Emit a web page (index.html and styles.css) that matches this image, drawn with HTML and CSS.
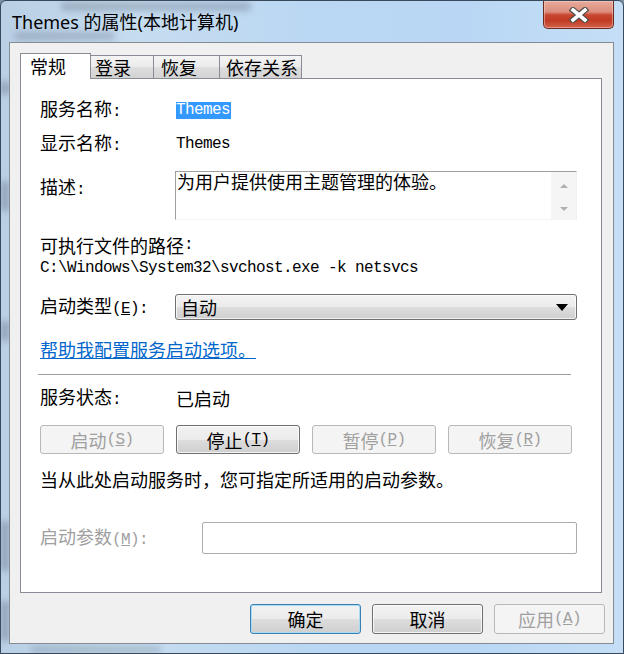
FILE: index.html
```html
<!DOCTYPE html>
<html lang="zh-CN">
<head>
<meta charset="utf-8">
<title>Themes 的属性(本地计算机)</title>
<link rel="stylesheet" href="styles.css">
</head>
<body>
<div class="window">
  <div class="glass">
    <span class="blob g1"></span>
    <span class="blob g2"></span>
    <span class="blob g3"></span>
    <span class="blob g4"></span>
    <span class="blob g5"></span>
    <span class="blob g6"></span>
    <span class="blob g7"></span>
    <span class="blob g8"></span>
  </div>
  <div class="titlebar">
    <div class="title">Themes 的属性(本地计算机)</div>
    <div class="close">
      <svg width="22" height="16" viewBox="0 0 22 16">
        <path d="M5 3 L17 13 M17 3 L5 13" stroke="#4b4b4b" stroke-width="6" stroke-linecap="square" fill="none"/>
        <path d="M5 3 L17 13 M17 3 L5 13" stroke="#ffffff" stroke-width="3.6" stroke-linecap="square" fill="none"/>
      </svg>
    </div>
  </div>
  <div class="client">
    <div class="tabs">
      <div class="tab active t1">常规</div>
      <div class="tab t2">登录</div>
      <div class="tab t3">恢复</div>
      <div class="tab t4">依存关系</div>
    </div>
    <div class="panel">
      <div class="row r1"><span class="lbl">服务名称<span class="lat">:</span></span><span class="lat"><span class="sel">Themes</span></span></div>
      <div class="row r2"><span class="lbl">显示名称<span class="lat">:</span></span><span class="lat">Themes</span></div>
      <div class="row r3">
        <span class="lbl top">描述<span class="lat">:</span></span>
        <div class="desc">
          <div class="desc-text">为用户提供使用主题管理的体验。</div>
          <div class="scroll"><span class="arr up"></span><span class="arr down"></span></div>
        </div>
      </div>
      <div class="row r4">可执行文件的路径<span class="lat">:</span></div>
      <div class="row r5"><span class="lat path">C:\Windows\System32\svchost.exe -k netsvcs</span></div>
      <div class="row r6">
        <span class="lbl">启动类型<span class="lat">(<u>E</u>):</span></span>
        <div class="combo"><span>自动</span><span class="caret"></span></div>
      </div>
      <div class="row r7"><a class="link">帮助我配置服务启动选项。</a></div>
      <div class="sep"></div>
      <div class="row r8"><span class="lbl">服务状态<span class="lat">:</span></span><span>已启动</span></div>
      <div class="btnrow">
        <div class="btn disabled">启动<span class="lat">(<u>S</u>)</span></div>
        <div class="btn">停止<span class="lat">(<u>T</u>)</span></div>
        <div class="btn disabled">暂停<span class="lat">(<u>P</u>)</span></div>
        <div class="btn disabled">恢复<span class="lat">(<u>R</u>)</span></div>
      </div>
      <div class="row r9">当从此处启动服务时，您可指定所适用的启动参数。</div>
      <div class="row r10">
        <span class="lbl wide gray">启动参数<span class="lat">(<u>M</u>):</span></span>
        <div class="input"></div>
      </div>
    </div>
    <div class="footer">
      <div class="btn big default">确定</div>
      <div class="btn big">取消</div>
      <div class="btn big disabled">应用<span class="lat">(<u>A</u>)</span></div>
    </div>
  </div>
</div>
</body>
</html>
```

FILE: styles.css
```css
html, body {
  margin: 0;
  padding: 0;
}
body {
  width: 624px;
  height: 654px;
  overflow: hidden;
  background: #7d8fa3;
}
.window {
  position: relative;
  width: 624px;
  height: 654px;
  box-sizing: border-box;
  border: 1px solid #38495c;
  border-radius: 6px 6px 0 0;
  overflow: hidden;
  background: linear-gradient(90deg, #b9cfe4 0%, #c6dcef 22%, #bad7f3 50%, #b9d7f4 75%, #c5def6 100%);
  font-family: "Noto Sans CJK SC", sans-serif;
  font-size: 18px;
  line-height: 20px;
  color: #000;
}
.glass {
  position: absolute;
  inset: 0;
}
.blob {
  position: absolute;
  background: rgba(70, 80, 100, 0.35);
  filter: blur(3px);
  border-radius: 3px;
}
.g1 { left: 60px; top: 1px; width: 190px; height: 9px; background: rgba(80, 90, 110, 0.3); }
.g2 { left: 14px; top: 31px; width: 100px; height: 8px; background: rgba(80, 90, 110, 0.28); }
.g3 { left: 0; top: 80px; width: 8px; height: 14px; }
.g4 { left: 0; top: 180px; width: 8px; height: 30px; }
.g5 { left: 0; top: 320px; width: 8px; height: 20px; }
.g6 { left: 0; top: 520px; width: 8px; height: 50px; }
.g7 { left: 30px; top: 645px; width: 130px; height: 7px; background: rgba(80, 90, 110, 0.25); }
.g8 { left: 0; top: 600px; width: 8px; height: 40px; }

.titlebar {
  position: relative;
  height: 41px;
  display: flex;
  align-items: flex-start;
}
.title {
  margin: 8px 0 0 11px;
  font-family: "Noto Sans", "Noto Sans CJK SC", sans-serif;
  font-size: 18px;
  line-height: 26px;
  color: #000;
}
.close {
  margin-left: auto;
  margin-right: 9px;
  width: 71px;
  height: 28px;
  box-sizing: border-box;
  border: 1px solid #6b2a20;
  border-top: none;
  border-radius: 0 0 5px 5px;
  background: linear-gradient(180deg, #e7ab9c 0%, #dc8e7d 40%, #c8462f 52%, #c03a24 72%, #d4634c 100%);
  box-shadow: inset 0 0 0 1px rgba(255, 220, 210, 0.45);
  display: flex;
  align-items: center;
  justify-content: center;
}

.client {
  position: relative;
  margin-left: 8px;
  width: 605px;
  height: 602px;
  box-sizing: border-box;
  border: 1px solid #858b92;
  background: #f0f0f0;
  padding: 10px 11px 0 10px;
}
.tabs {
  display: flex;
  align-items: flex-end;
  height: 25px;
  position: relative;
  z-index: 1;
}
.tab {
  box-sizing: border-box;
  height: 23px;
  border: 1px solid #898c95;
  border-bottom: none;
  background: linear-gradient(180deg, #f4f4f4 0%, #ebebeb 50%, #dedede 52%, #d3d3d3 100%);
  line-height: 22px;
  margin-left: -1px;
}
.tab.active {
  height: 26px;
  margin-bottom: -1px;
  margin-left: 0;
  background: #fff;
  line-height: 25px;
}
.t1 { width: 71px; padding-left: 9px; }
.t2 { width: 64px; padding-left: 4px; }
.t3 { width: 67px; padding-left: 7px; }
.t4 { width: 83px; padding-left: 6px; }

.panel {
  box-sizing: border-box;
  width: 582px;
  height: 515px;
  border: 1px solid #898c95;
  background: #fff;
  padding: 21px 24px 0 19px;
}
.lat {
  font-family: "Liberation Mono", monospace;
  font-size: 16px;
  letter-spacing: -0.6px;
}
.row {
  display: flex;
  align-items: center;
  height: 20px;
  white-space: nowrap;
}
.lbl {
  width: 136px;
  flex: none;
}
.lbl.wide { width: 162px; }
.gray { color: #a0a0a0; }
.lbl.top { align-self: flex-start; margin-top: 5px; }
.sel {
  display: inline-block;
  height: 17px;
  line-height: 17px;
  padding-right: 1px;
  background: #3399ff;
  color: #fff;
}
.r2 { margin-top: 14px; }
.r3 { margin-top: 17px; height: 49px; align-items: flex-start; }
.r4 { margin-top: 15px; }
.r5 { margin-top: 3px; }
.r6 { margin-top: 16px; height: 26px; }
.r7 { margin-top: 19px; }
.r8 { margin-top: 13px; }
.r9 { margin-top: 15px; }
.r10 { margin-top: 33px; height: 32px; }

.desc {
  margin-left: -1px;
  width: 402px;
  height: 49px;
  box-sizing: border-box;
  border: 1px solid;
  border-color: #a0a0a0 #f0f0f0 #f4f4f4 #a0a0a0;
  display: flex;
}
.desc-text {
  flex: 1;
  padding: 0 0 0 1px;
  line-height: 18px;
}
.scroll {
  width: 25px;
  background: #f5f5f5;
  display: flex;
  flex-direction: column;
  align-items: center;
  padding-top: 12px;
  box-sizing: border-box;
}
.arr {
  width: 0;
  height: 0;
  border-left: 4px solid transparent;
  border-right: 4px solid transparent;
}
.arr.up { border-bottom: 4px solid #b0b0b0; }
.arr.down { border-top: 4px solid #b0b0b0; margin-top: 19px; }

.combo {
  margin-left: -1px;
  width: 402px;
  height: 26px;
  box-sizing: border-box;
  border: 1px solid #707070;
  border-radius: 3px;
  background: linear-gradient(180deg, #f3f3f3 0%, #ebebeb 50%, #dddddd 51%, #cfcfcf 100%);
  box-shadow: inset 0 0 0 1px rgba(255, 255, 255, 0.7);
  display: flex;
  align-items: center;
  padding-left: 5px;
}
.caret {
  margin-left: auto;
  margin-right: 8px;
  width: 0;
  height: 0;
  border-left: 6px solid transparent;
  border-right: 6px solid transparent;
  border-top: 7px solid #000;
}
.link {
  color: #0066cc;
  text-decoration: underline;
}
.sep {
  margin: 15px 0 0 -2px;
  width: 533px;
  height: 1px;
  background: #a0a0a0;
}
.btnrow {
  display: flex;
  gap: 12px;
  margin-top: 17px;
}
.btn {
  box-sizing: border-box;
  width: 124px;
  height: 29px;
  border: 1px solid #707070;
  border-radius: 3px;
  background: linear-gradient(180deg, #f2f2f2 0%, #ebebeb 50%, #dddddd 51%, #cfcfcf 100%);
  box-shadow: inset 0 0 0 1px rgba(255, 255, 255, 0.75);
  display: flex;
  align-items: center;
  justify-content: center;
  white-space: nowrap;
  line-height: 20px;
}
.btn.disabled {
  border-color: #b8b8b8;
  background: #f4f4f4;
  box-shadow: none;
  color: #a0a0a0;
}
.btn.big {
  width: 111px;
  height: 30px;
}
.btn.default {
  border-color: #3c7fb1;
  box-shadow: inset 0 0 0 1px #a6dcf6;
}
.input {
  width: 375px;
  height: 32px;
  box-sizing: border-box;
  border: 1px solid #acacac;
  border-radius: 2px;
  background: #fff;
}
.footer {
  display: flex;
  justify-content: flex-end;
  gap: 11px;
  margin: 11px -3px 0 0;
}
```
